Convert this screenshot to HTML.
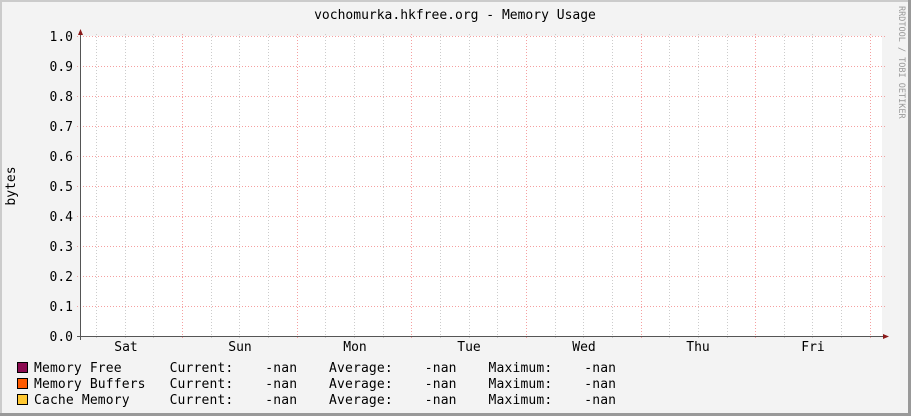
<!DOCTYPE html>
<html><head><meta charset="utf-8"><style>
html,body{margin:0;padding:0;background:#f3f3f3;}
svg{display:block;}
text{font-family:"DejaVu Sans Mono","Liberation Mono",monospace;}
</style></head><body>
<svg width="911" height="416" xmlns="http://www.w3.org/2000/svg">
<rect x="0" y="0" width="911" height="416" fill="#f3f3f3"/>
<rect x="0" y="0" width="911" height="2" fill="#cbcbcb"/>
<rect x="0" y="0" width="2" height="416" fill="#cbcbcb"/>
<rect x="908" y="0" width="3" height="416" fill="#999"/>
<rect x="0" y="413" width="911" height="3" fill="#999"/>
<rect x="81" y="36" width="801" height="300" fill="#fff"/>
<g stroke="#ccc" stroke-width="1" stroke-dasharray="1,2">
<line x1="96.5" y1="34" x2="96.5" y2="339"/><line x1="125.5" y1="34" x2="125.5" y2="339"/><line x1="153.5" y1="34" x2="153.5" y2="339"/>
<line x1="211.5" y1="34" x2="211.5" y2="339"/><line x1="239.5" y1="34" x2="239.5" y2="339"/><line x1="268.5" y1="34" x2="268.5" y2="339"/>
<line x1="325.5" y1="34" x2="325.5" y2="339"/><line x1="354.5" y1="34" x2="354.5" y2="339"/><line x1="383.5" y1="34" x2="383.5" y2="339"/>
<line x1="440.5" y1="34" x2="440.5" y2="339"/><line x1="469.5" y1="34" x2="469.5" y2="339"/><line x1="497.5" y1="34" x2="497.5" y2="339"/>
<line x1="555.5" y1="34" x2="555.5" y2="339"/><line x1="583.5" y1="34" x2="583.5" y2="339"/><line x1="612.5" y1="34" x2="612.5" y2="339"/>
<line x1="669.5" y1="34" x2="669.5" y2="339"/><line x1="698.5" y1="34" x2="698.5" y2="339"/><line x1="727.5" y1="34" x2="727.5" y2="339"/>
<line x1="784.5" y1="34" x2="784.5" y2="339"/><line x1="812.5" y1="34" x2="812.5" y2="339"/><line x1="841.5" y1="34" x2="841.5" y2="339"/>
</g>
<g stroke="#f5a0a0" stroke-width="1" stroke-dasharray="1,2">
<line x1="182.5" y1="34" x2="182.5" y2="339"/><line x1="297.5" y1="34" x2="297.5" y2="339"/><line x1="411.5" y1="34" x2="411.5" y2="339"/>
<line x1="526.5" y1="34" x2="526.5" y2="339"/><line x1="641.5" y1="34" x2="641.5" y2="339"/><line x1="755.5" y1="34" x2="755.5" y2="339"/><line x1="870.5" y1="34" x2="870.5" y2="339"/>
<line x1="77" y1="36.5" x2="885" y2="36.5"/><line x1="77" y1="66.5" x2="885" y2="66.5"/><line x1="77" y1="96.5" x2="885" y2="96.5"/>
<line x1="77" y1="126.5" x2="885" y2="126.5"/><line x1="77" y1="156.5" x2="885" y2="156.5"/><line x1="77" y1="186.5" x2="885" y2="186.5"/>
<line x1="77" y1="216.5" x2="885" y2="216.5"/><line x1="77" y1="246.5" x2="885" y2="246.5"/><line x1="77" y1="276.5" x2="885" y2="276.5"/>
<line x1="77" y1="306.5" x2="885" y2="306.5"/>
</g>
<line x1="80.5" y1="32" x2="80.5" y2="340" stroke="#555"/>
<line x1="77" y1="336.5" x2="886" y2="336.5" stroke="#555"/>
<polygon points="78,35 83,35 80.5,29" fill="#8b1a1a"/>
<polygon points="883,334 883,339 889,336.5" fill="#8b1a1a"/>
<g font-size="13" fill="#000" text-anchor="end">
<text x="73" y="41">1.0</text><text x="73" y="71">0.9</text><text x="73" y="101">0.8</text><text x="73" y="131">0.7</text>
<text x="73" y="161">0.6</text><text x="73" y="191">0.5</text><text x="73" y="221">0.4</text><text x="73" y="251">0.3</text>
<text x="73" y="281">0.2</text><text x="73" y="311">0.1</text><text x="73" y="341">0.0</text>
</g>
<g font-size="13" fill="#000" text-anchor="middle">
<text x="126" y="351">Sat</text><text x="240" y="351">Sun</text><text x="355" y="351">Mon</text><text x="469" y="351">Tue</text>
<text x="584" y="351">Wed</text><text x="698" y="351">Thu</text><text x="813" y="351">Fri</text>
<text x="455" y="19">vochomurka.hkfree.org - Memory Usage</text>
</g>
<text x="15" y="186" font-size="13" text-anchor="middle" transform="rotate(-90 15 186)">bytes</text>
<text x="899" y="6" font-size="8.5" fill="#999" transform="rotate(90 899 6)">RRDTOOL / TOBI OETIKER</text>
<rect x="17.5" y="362.5" width="10" height="10" fill="#8b0a50" stroke="#000"/>
<rect x="17.5" y="378.5" width="10" height="10" fill="#ff5a00" stroke="#000"/>
<rect x="17.5" y="394.5" width="10" height="10" fill="#ffc832" stroke="#000"/>
<g font-size="13" fill="#000">
<text x="34" y="372" xml:space="preserve" textLength="582" lengthAdjust="spacing">Memory Free      Current:    -nan    Average:    -nan    Maximum:    -nan</text>
<text x="34" y="388" xml:space="preserve" textLength="582" lengthAdjust="spacing">Memory Buffers   Current:    -nan    Average:    -nan    Maximum:    -nan</text>
<text x="34" y="404" xml:space="preserve" textLength="582" lengthAdjust="spacing">Cache Memory     Current:    -nan    Average:    -nan    Maximum:    -nan</text>
</g>
</svg>
</body></html>
